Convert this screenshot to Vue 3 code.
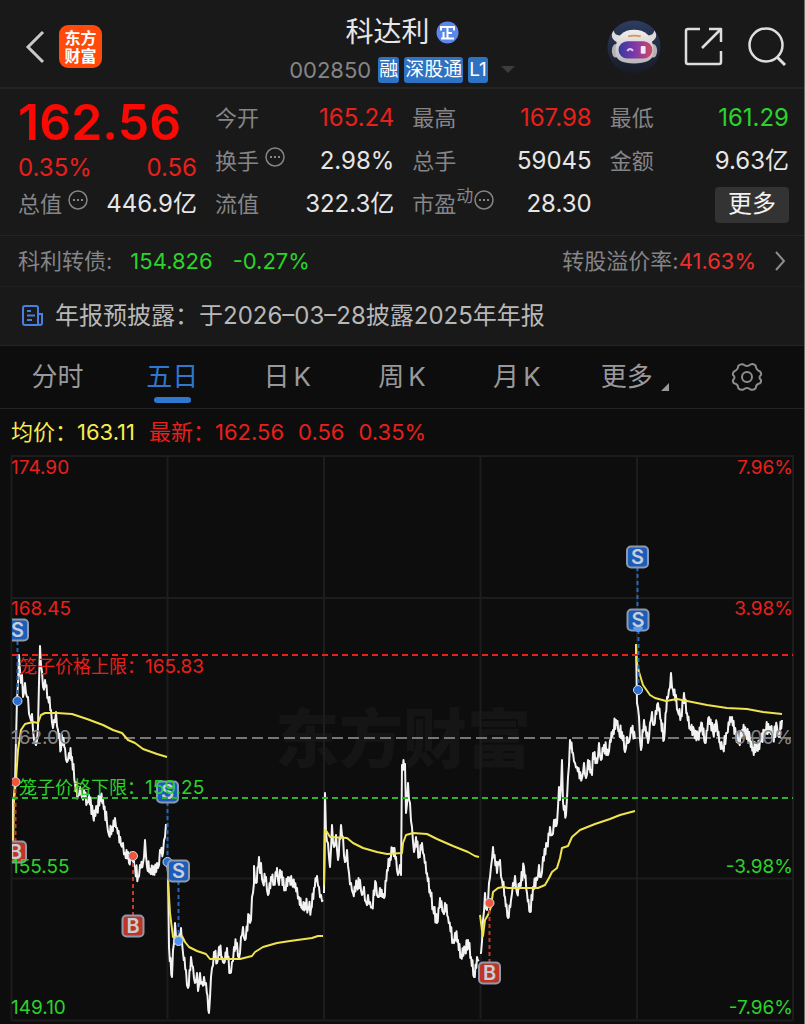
<script setup>
import { ref } from 'vue'

const quotes = [
  { label: '今开', value: '165.24', tone: 'up' },
  { label: '最高', value: '167.98', tone: 'up' },
  { label: '最低', value: '161.29', tone: 'down' },
  { label: '换手', value: '2.98%', info: true },
  { label: '总手', value: '59045' },
  { label: '金额', value: '9.63亿' },
  { label: '流值', value: '322.3亿' },
  { label: '市盈', sup: '动', value: '28.30', info: true },
]

const tabs = [
  { name: '分时' },
  { name: '五日' },
  { name: '日', unit: 'K' },
  { name: '周', unit: 'K' },
  { name: '月', unit: 'K' },
]
const active = ref('五日')

const gridX = [11.5, 167.5, 324, 480.5, 637, 793]
const gridY = [456, 598, 878.5, 1020.5]

const priceDays = [
  '12,852 13,800 15,783 16,740 17,700 19,655 21,683 22,675 23,697 25,683 27,697 28,697 30,717 32,714 33,730 35,743 36,745 38,727 39,683 40,646 42,672 43,687 45,680 48,697 51,710 53,728 54,720 56,712 58,730 61,750 62,735 65,748 67,762 69,753 72,757 75,783 78,795 80,787 82,797 84,790 87,803 89,795 93,815 97,810 100,795 103,800 107,823 109,835 112,827 115,818 117,828 121,845 123,843 125,853 128,852 129,863 132,855 135,867 138,877 140,865 143,863 145,840 147,867 150,869 158,868 160,850 163,853 164,840 166,824',
  '167,862 168,873 169,947 172,977 173,950 175,923 177,937 178,943 181,928 183,953 186,970 188,988 191,957 193,967 195,983 197,973 198,991 200,973 202,982 204,977 206,983 209,1013 211,977 212,968 214,952 217,963 219,947 222,957 224,963 227,948 230,973 232,962 234,947 237,943 239,958 241,937 243,927 245,940 249,915 251,920 252,897 254,883 254,866 256,883 259,857 260,873 261,863 263,883 266,877 268,895 271,877 274,883 277,868 279,885 280,870 285,888 288,877 292,883 297,888 299,897 302,908 305,903 308,907 311,909 314,888 317,876 319,887 321,895 323,900',
  '324,893 325,793 326,833 328,843 330,867 332,825 334,847 336,835 338,860 341,825 343,837 345,862 347,850 349,873 351,883 353,893 357,885 360,880 362,895 364,887 366,902 368,895 370,902 372,907 376,883 378,897 380,888 384,898 387,870 390,858 393,848 396,857 398,875 400,865 401,875 402,765 405,764 406,813 408,783 410,803 412,827 414,852 416,837 419,857 422,843 424,855 427,873 430,890 433,907 437,923 440,898 443,912 445,903 448,917 453,940 455,933 458,940 461,955 465,952 468,940 471,957 474,977 477,957 479,960',
  '480,953 481,953 483,920 485,893 487,910 489,883 491,867 493,847 497,873 498,862 500,860 502,880 505,897 508,918 511,900 513,883 515,876 517,893 520,883 524,867 527,893 530,912 533,887 537,880 539,865 541,877 543,857 547,845 550,827 552,835 554,820 557,823 559,787 560,800 562,760 563,802 566,815 568,777 570,740 573,753 575,763 577,767 582,778 584,763 586,778 588,760 591,770 592,775 593,753 597,763 599,743 601,760 604,745 608,755 610,740 613,730 616,720 619,730 622,732 625,752 627,737 629,742 631,728 635,739',
  '636,645 637,703 638,708 639,717 641,750 644,720 648,743 650,723 652,712 654,725 658,703 661,720 664,740 667,697 669,690 671,673 673,690 676,695 678,712 681,715 684,693 687,713 690,727 694,730 698,738 702,723 705,743 709,717 713,732 717,725 720,743 723,748 727,733 730,717 732,717 736,735 739,743 742,730 746,733 750,740 753,748 757,750 760,740 765,730 770,727 773,737 777,727 779,737 782,720',
]

const averageDays = [
  '13,850 14,800 16,780 18,750 21,730 25,724 33,722 38,723 41,715 45,713 57,713 72,714 87,719 103,725 113,730 122,733 128,740 135,743 143,749 157,754 167,757',
  '168,865 168,880 170,913 173,937 182,936 185,942 189,947 197,951 206,954 210,959 240,959 252,956 255,952 263,947 277,943 290,941 312,938 318,936 323,936',
  '324,885 325,830 327,832 330,837 347,838 353,843 363,848 377,852 387,854 402,853 403,843 406,835 413,833 427,834 437,839 453,846 468,852 475,856 479,857',
  '480,915 482,930 483,936 485,920 488,915 491,907 493,892 498,888 503,887 508,888 538,888 545,885 549,878 552,872 557,868 560,858 562,848 568,846 572,837 580,830 595,824 610,819 620,815 635,811',
  '636,644 637,663 639,672 643,685 650,695 655,698 666,701 677,699 687,701 707,705 727,708 747,709 763,712 782,714',
]

// Adds the minute-by-minute wobble between the recorded turning points.
function withTicks(points, seed) {
  const list = points.split(' ').map((p) => p.split(',').map(Number))
  const out = []
  let s = seed
  for (let i = 0; i < list.length; i++) {
    out.push(list[i].join(','))
    const next = list[i + 1]
    if (!next) break
    const [x, y] = list[i]
    const gap = next[0] - x
    if (gap < 2) continue
    const n = gap < 3 ? 1 : gap
    for (let k = 1; k <= n; k++) {
      s = (s * 16807) % 2147483647
      const t = k / (n + 1)
      const swing = (k % 2 ? 1 : -1) * (2 + (s % 50) / 10)
      out.push(`${(x + gap * t).toFixed(1)},${(y + (next[1] - y) * t + swing).toFixed(1)}`)
    }
  }
  return out.join(' ')
}

const priceLines = priceDays.map((d, i) => withTicks(d, 97 + i * 31))

const stems = [
  { x: 17.5, y1: 641, y2: 701, kind: 's' },
  { x: 15.5, y1: 782, y2: 842, kind: 'b' },
  { x: 133, y1: 856, y2: 916, kind: 'b' },
  { x: 167.5, y1: 802, y2: 862, kind: 's' },
  { x: 178.5, y1: 881, y2: 941, kind: 's' },
  { x: 489.5, y1: 903, y2: 963, kind: 'b' },
  { x: 637.5, y1: 567, y2: 628, kind: 's' },
  { x: 638.5, y1: 630, y2: 690, kind: 's' },
]
const dots = [
  { x: 17.5, y: 701, kind: 's' },
  { x: 15.5, y: 782, kind: 'b' },
  { x: 133, y: 856, kind: 'b' },
  { x: 167.5, y: 862, kind: 's' },
  { x: 178.5, y: 941, kind: 's light' },
  { x: 489.5, y: 903, kind: 'b' },
  { x: 638, y: 690, kind: 's' },
]
const marks = [
  { x: 17.5, y: 630, kind: 's' },
  { x: 15.5, y: 852, kind: 'b' },
  { x: 133, y: 926, kind: 'b' },
  { x: 167.5, y: 792, kind: 's' },
  { x: 178.5, y: 871, kind: 's' },
  { x: 489.5, y: 973, kind: 'b' },
  { x: 637.5, y: 557, kind: 's' },
  { x: 638, y: 620, kind: 's' },
]
const axis = [
  { y: 474, price: '174.90', pct: '7.96%', tone: 'up' },
  { y: 615, price: '168.45', pct: '3.98%', tone: 'up' },
  { y: 744, price: '162.00', pct: '0.00%', tone: 'flat' },
  { y: 873, price: '155.55', pct: '-3.98%', tone: 'down' },
  { y: 1014, price: '149.10', pct: '-7.96%', tone: 'down' },
]
</script>

<template>
  <main class="page">
    <header class="top">
      <div class="side">
        <button class="icon-btn" aria-label="返回">
          <svg width="22" height="36" viewBox="0 0 22 36"><path d="M19 3 4 18l15 15" fill="none" stroke="#c9c9c9" stroke-width="3" /></svg>
        </button>
        <div class="logo"><span>东方</span><span>财富</span></div>
      </div>
      <div class="title">
        <h1>科达利
          <svg width="23" height="23" viewBox="0 0 23 23" aria-hidden="true"><circle cx="11.500" cy="11.500" r="11" fill="#5b87ea" /><path d="M5 9.500V6h13v3.500M11.500 6v11.500M7.500 11v6.500M11.500 12h4.500M5 17.500h13" fill="none" stroke="#fff" stroke-width="2" /></svg>
        </h1>
        <div class="code">
          <span class="num">002850</span>
          <span class="tag">融</span><span class="tag">深股通</span><span class="tag">L1</span>
          <button class="icon-btn caret" aria-label="展开"><svg width="14" height="8" viewBox="0 0 14 8"><path d="M0 0h14L7 7z" fill="#3d3d3d" /></svg></button>
        </div>
      </div>
      <div class="side tools">
        <button class="icon-btn" aria-label="智能助手">
          <svg width="54" height="54" viewBox="0 0 56 56">
            <defs>
              <linearGradient id="sky" x1="0" y1="0" x2="0" y2="1"><stop offset="0" stop-color="#2c3c60" /><stop offset="1" stop-color="#171b25" /></linearGradient>
              <linearGradient id="shell" x1="0" y1="0" x2="0" y2="1"><stop offset="0" stop-color="#f1efee" /><stop offset="1" stop-color="#b9b5b8" /></linearGradient>
              <linearGradient id="visor"><stop offset="0" stop-color="#333a9f" /><stop offset=".5" stop-color="#8238a8" /><stop offset="1" stop-color="#d04a62" /></linearGradient>
            </defs>
            <circle cx="28" cy="28" r="27.500" fill="url(#sky)" />
            <path d="M12 24C5 21 3 16 7 11c1 5 5 6 12 4zM44 24c7-3 9-8 5-13-1 5-5 6-12 4z" fill="#dedbdb" />
            <ellipse cx="9" cy="32" rx="4" ry="7" fill="#b5b1b5" /><ellipse cx="48" cy="32" rx="4" ry="7" fill="#b5b1b5" />
            <path d="M9 29C10 16 17 10 28 10s19 6 20 19v5c0 8-8 11-20 11S9 42 9 34z" fill="url(#shell)" />
            <rect x="12" y="22" width="35" height="18" rx="9" fill="url(#visor)" />
            <path d="M22 17c4-1 9-1 13 0" fill="none" stroke="#d99454" stroke-width="2" />
            <path d="M21 32q3-4 6 0" fill="none" stroke="#dcc7ff" stroke-width="2" /><rect x="35" y="27" width="5" height="8" rx="1" fill="#f3e8f3" />
          </svg>
        </button>
        <button class="icon-btn" aria-label="分享">
          <svg width="40" height="40" viewBox="0 0 40 40"><path d="M16 2H4q-2 0-2 2v31q0 2 2 2h31q2 0 2-2V24M25 2h12v13M37 2 18 21" fill="none" stroke="#dedede" stroke-width="2.500" stroke-linejoin="round" /></svg>
        </button>
        <button class="icon-btn" aria-label="搜索">
          <svg width="40" height="40" viewBox="0 0 40 40"><circle cx="19" cy="18" r="16.500" fill="none" stroke="#dedede" stroke-width="2.500" /><path d="m30 30 8 8" stroke="#dedede" stroke-width="3" /></svg>
        </button>
      </div>
    </header>

    <section class="quote">
      <div class="main-quote">
        <strong>162.56</strong>
        <div class="cell change up"><span>0.35%</span><span>0.56</span></div>
        <div class="cell">
          <span class="label">总值<svg class="info" width="20" height="20" viewBox="0 0 20 20"><circle cx="10" cy="10" r="9" fill="none" stroke="#858588" stroke-width="1.500" /><path d="M5 10h2M9 10h2M13 10h2" stroke="#858588" stroke-width="2" /></svg></span>
          <span>446.9亿</span>
        </div>
      </div>
      <div class="details">
        <div v-for="q in quotes" :key="q.label" class="cell">
          <span class="label">{{ q.label }}<sup v-if="q.sup">{{ q.sup }}</sup><svg v-if="q.info" class="info" :class="{ tight: q.sup }" width="20" height="20" viewBox="0 0 20 20"><circle cx="10" cy="10" r="9" fill="none" stroke="#858588" stroke-width="1.500" /><path d="M5 10h2M9 10h2M13 10h2" stroke="#858588" stroke-width="2" /></svg></span>
          <span :class="q.tone">{{ q.value }}</span>
        </div>
        <div class="cell end"><button class="more">更多</button></div>
      </div>
    </section>

    <a class="bond" href="#bond">
      <span class="label">科利转债:</span><span class="down first">154.826</span><span class="down">-0.27%</span>
      <span class="label push">转股溢价率:</span><span class="rate">41.63%</span>
      <svg width="12" height="20" viewBox="0 0 12 20"><path d="m2 1 8 9-8 9" fill="none" stroke="#8d8d90" stroke-width="2" /></svg>
    </a>

    <a class="notice" href="#notice">
      <svg width="22" height="22" viewBox="0 0 22 22"><path d="M16 20H3q-2 0-2-2V3q0-2 2-2h11q2 0 2 2v15q0 2 2 2t2-2V9h-4M5 6h4M5 10.500h8M5 15h5" fill="none" stroke="#4a7fe0" stroke-width="2" /></svg>
      <span>年报预披露：于2026–03–28披露2025年年报</span>
    </a>

    <nav class="tabs">
      <button v-for="t in tabs" :key="t.name" :class="{ active: t.name === active }" @click="active = t.name">{{ t.name }}<span v-if="t.unit" class="unit">{{ t.unit }}</span></button>
      <button class="menu">更多<svg class="corner" width="8" height="8" viewBox="0 0 8 8"><path d="M8 0v8H0z" fill="#99999b" /></svg></button>
      <button aria-label="设置">
        <svg width="32" height="30" viewBox="0 0 32 30"><path d="M12.500 2.500Q16 5.500 19.500 2.500q2-1.300 4 .3l1.200 1Q25 8 29 9.500q1.500 1.500 1 3.500-3 2.300 0 5 .4 2-1 3.300Q25 22 24.700 26.200q-2.500 2.300-5.200 1.300-3.500-3-7 0-2.700 1-5.200-1.300Q7 22 3 21.300 1.600 20 2 18q3-2.700 0-5-.5-2 1-3.500Q7 8 7.300 3.800q2.700-2.300 5.200-1.300z" fill="none" stroke="#8d8d90" stroke-width="2" stroke-linejoin="round" /><circle cx="16" cy="15" r="5" fill="none" stroke="#8d8d90" stroke-width="2" /></svg>
      </button>
    </nav>

    <div class="legend">
      <span class="avg">均价：163.11</span>
      <span>最新：162.56</span><span>0.56</span><span>0.35%</span>
    </div>

    <svg class="chart" viewBox="0 455 804 569" role="img" aria-label="五日走势图">
      <defs><clipPath id="plot"><rect x="12" y="456" width="781" height="566" /></clipPath></defs>
      <text class="watermark" x="403" y="762" text-anchor="middle">东方财富</text>
      <g class="grid">
        <line v-for="x in gridX" :key="x" :x1="x" :x2="x" y1="457" y2="1019" />
        <line v-for="y in gridY" :key="y" x1="11" x2="794" :y1="y" :y2="y" />
      </g>
      <line class="mid" x1="12" x2="793" y1="738" y2="738" />
      <g clip-path="url(#plot)">
        <polyline v-for="(p, i) in priceLines" :key="i" class="price" :points="p" />
        <polyline v-for="(p, i) in averageDays" :key="i" class="average" :points="p" />
        <line v-for="(s, i) in stems" :key="i" class="stem" :class="s.kind" :x1="s.x" :x2="s.x" :y1="s.y1" :y2="s.y2" />
        <circle v-for="(d, i) in dots" :key="i" class="dot" :class="d.kind" :cx="d.x" :cy="d.y" r="4.500" />
        <g v-for="(m, i) in marks" :key="i" class="mark" :class="m.kind">
          <rect :x="m.x - 10.5" :y="m.y - 10.5" width="21" height="21" rx="4" />
          <text :x="m.x" :y="m.y + 7" text-anchor="middle">{{ m.kind.toUpperCase() }}</text>
        </g>
        <path d="M633 627a5 5 0 0 0 10 0z" fill="#5a9bf5" />
      </g>
      <line class="limit up" x1="12" x2="793" y1="655" y2="655" />
      <line class="limit down" x1="12" x2="793" y1="798" y2="798" />
      <g v-for="a in axis" :key="a.y" class="axis" :class="a.tone">
        <text x="11" :y="a.y">{{ a.price }}</text>
        <text x="793" :y="a.y" text-anchor="end">{{ a.pct }}</text>
      </g>
      <text class="bound up" x="19" y="673">笼子价格上限：<tspan class="axis">165.83</tspan></text>
      <text class="bound down" x="19" y="794">笼子价格下限：<tspan class="axis">159.25</tspan></text>
    </svg>
  </main>
</template>

<style>
body {
  background: #0d0d0d;
}
</style>

<style scoped>
.page {
  box-sizing: border-box;
  border-right: 1px solid #6d6d6d;
  background: #0d0d0d;
  color: #e6e6e6;
  font-family: Inter, "Noto Sans CJK SC", sans-serif;
  line-height: 1.2;
}
button {
  padding: 0;
  border: 0;
  background: none;
  color: inherit;
  font: inherit;
  cursor: pointer;
}
a {
  color: inherit;
  text-decoration: none;
}
svg {
  display: block;
  flex: none;
}
.up { color: #e8201c; fill: #e8201c; }
.down { color: #2bd32b; fill: #2bd32b; }
.flat { fill: #858588; }
.label { color: #858588; }

.top {
  display: grid;
  grid-template-columns: 1fr auto 1fr;
  height: 87px;
  padding: 0 17px;
  background: #191919;
  border-bottom: 2px solid #242424;
}
.side {
  display: flex;
  align-items: center;
  gap: 13px;
  padding: 6px 0 0 7px;
}
.tools {
  justify-content: flex-end;
  gap: 23px;
}
.logo {
  display: flex;
  flex-direction: column;
  justify-content: center;
  width: 43px;
  height: 43px;
  border-radius: 9px;
  background: #ff4a0c;
  color: #fff;
  font-size: 16px;
  font-weight: 700;
  line-height: 18px;
  text-align: center;
}
.title {
  display: flex;
  flex-direction: column;
  align-items: center;
  padding-top: 12px;
}
h1 {
  display: flex;
  align-items: center;
  gap: 6px;
  margin: 0;
  font-size: 28px;
  font-weight: 400;
  line-height: 40px;
}
.code {
  display: flex;
  align-items: center;
  gap: 5px;
  margin-top: 5px;
  line-height: 26px;
}
.num {
  margin-right: 2px;
  color: #858588;
  font-size: 22px;
}
.tag {
  padding: 0 1px;
  border-radius: 3px;
  background: #2e72c4;
  color: #fff;
  font-size: 19px;
  line-height: 26px;
}
.caret { margin-left: 8px; }

.quote {
  display: grid;
  grid-template-columns: 179fr 574fr;
  gap: 18px;
  padding: 8px 15px 9px 18px;
  background: #191919;
  border-bottom: 1px solid #242424;
  font-size: 24px;
}
.main-quote {
  display: flex;
  flex-direction: column;
}
.main-quote strong {
  height: 50px;
  font-size: 50px;
  font-weight: 600;
  line-height: 50px;
  color: #fa0a05;
}
.details {
  display: grid;
  grid-template-columns: repeat(3, 1fr);
  column-gap: 18px;
}
.cell {
  display: flex;
  justify-content: space-between;
  align-items: center;
  height: 43px;
  white-space: nowrap;
}
.cell.change {
  box-sizing: border-box;
  height: 36px;
  padding-top: 6px;
}
.cell.end { justify-content: flex-end; }
.label {
  display: flex;
  align-items: center;
}
.cell .label { font-size: 22px; }
.info {
  margin: -8px 0 0 6px;
}
.info.tight { margin-left: 1px; }
sup {
  margin-top: -16px;
  font-size: 17px;
  line-height: 20px;
}
.more {
  width: 74px;
  height: 36px;
  border-radius: 4px;
  background: #333;
  color: #f2f2f2;
}

.bond {
  display: flex;
  align-items: center;
  height: 50px;
  padding: 0 18px;
  background: #191919;
  border-bottom: 1px solid #202020;
  font-size: 22px;
}
.bond .first { margin: 0 20px 0 18px; }
.push { margin-left: auto; }
.rate {
  margin-right: 18px;
  color: #ea302c;
}
.notice {
  display: flex;
  align-items: center;
  gap: 11px;
  height: 58px;
  padding: 0 22px;
  background: #191919;
  border-bottom: 1px solid #242424;
  color: #b8b8b8;
  font-size: 24px;
}
.tabs {
  display: grid;
  grid-template-columns: repeat(7, 1fr);
  height: 62px;
  border-bottom: 1px solid #222;
}
.tabs button {
  position: relative;
  display: flex;
  align-items: center;
  justify-content: center;
  color: #99999b;
  font-size: 26px;
}
.unit { margin-left: 4px; }
.tabs .menu { padding-left: 6px; }
.tabs .active { color: #2f77cf; }
.tabs .active::after {
  content: "";
  position: absolute;
  bottom: 5px;
  width: 37px;
  height: 6px;
  border-radius: 3px;
  background: #2f77cf;
}
.corner { margin: 20px 0 0 8px; }
.legend {
  display: flex;
  gap: 14px;
  height: 46px;
  padding-left: 11px;
  align-items: center;
  color: #e8201c;
  font-size: 22px;
}
.avg { color: #f5ec50; }

.chart { width: 100%; }
.chart text { font-family: Inter, "Noto Sans CJK SC", sans-serif; }
.watermark {
  fill: #151515;
  font-size: 64px;
  font-weight: 900;
}
.grid line { stroke: #1d1d1d; stroke-width: 2; }
.mid { stroke: #77777a; stroke-width: 2; stroke-dasharray: 11 5; }
.price {
  fill: none;
  stroke: #f2f2f2;
  stroke-width: 2;
  stroke-linejoin: round;
}
.average {
  fill: none;
  stroke: #efe34f;
  stroke-width: 2;
  stroke-linejoin: round;
}
.limit { stroke-width: 2; stroke-dasharray: 6 4; }
.limit.up { stroke: #e8201c; }
.limit.down { stroke: #2bb52b; }
.stem { stroke-width: 2; stroke-dasharray: 4 3; }
.stem.s { stroke: #2766bd; }
.stem.b { stroke: #c23a2c; }
.dot { stroke: #cfdcf0; stroke-width: 1; }
.dot.s { fill: #2a6fd0; }
.dot.s.light { fill: #4c93f5; }
.dot.b { fill: #f0563e; }
.mark rect { stroke: #8e9aac; stroke-width: 2; }
.mark.s rect { fill: #1c5cba; }
.mark.b rect { fill: #bd3527; }
.mark text {
  fill: #c9ced6;
  font-size: 20px;
  font-weight: 600;
}
.axis { font-size: 19px; }
.bound { font-size: 18px; }
</style>
